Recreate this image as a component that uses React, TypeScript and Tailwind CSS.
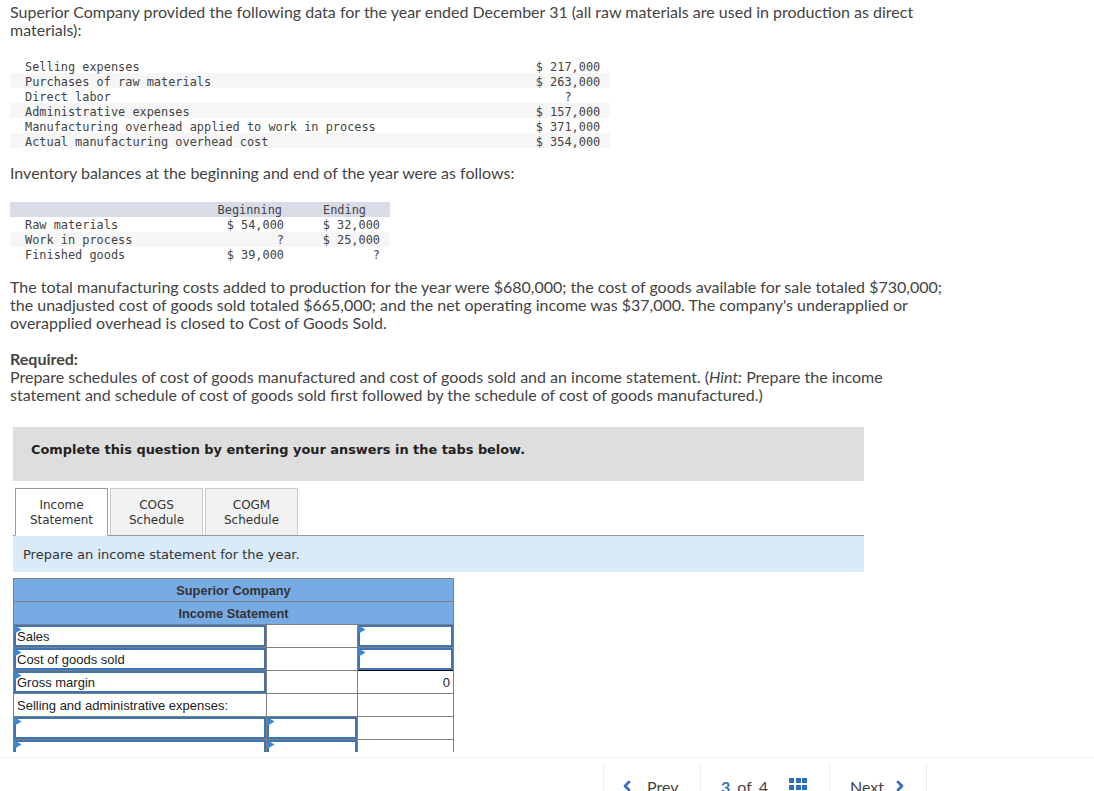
import React from "react";
import { ChevronLeft, ChevronRight } from "lucide-react";

const costs = [
  ["Selling expenses", "$ 217,000"],
  ["Purchases of raw materials", "$ 263,000"],
  ["Direct labor", "?"],
  ["Administrative expenses", "$ 157,000"],
  ["Manufacturing overhead applied to work in process", "$ 371,000"],
  ["Actual manufacturing overhead cost", "$ 354,000"],
];

const inventory = [
  ["Raw materials", "$ 54,000", "$ 32,000"],
  ["Work in process", "?", "$ 25,000"],
  ["Finished goods", "$ 39,000", "?"],
];

// small blue corner marker on the answer cells
const Marker: React.FC = () => (
  <svg className="absolute -left-[2px] -top-[2px]" width="8" height="9" viewBox="0 0 8 9">
    <path d="M0 0 L7.5 4.5 L0 9 Z" fill="#3d85d0" />
  </svg>
);

const InputCell: React.FC<{ children?: React.ReactNode }> = ({ children }) => (
  <div className="relative flex items-center whitespace-nowrap border-2 border-[#3f74b2] bg-white pl-px">
    <Marker />
    {children}
  </div>
);

const PlainCell: React.FC<{ children?: React.ReactNode; className?: string }> = ({
  children,
  className = "",
}) => (
  <div className={`flex items-center whitespace-nowrap bg-white px-[3px] ${className}`}>
    {children}
  </div>
);

const Row: React.FC<{ children: React.ReactNode }> = ({ children }) => (
  <div className="grid h-[22px] shrink-0 grid-cols-[252px_90px_95px] grid-rows-[22px] gap-px leading-[15px]">
    {children}
  </div>
);

const HeadRow: React.FC<{ children: React.ReactNode }> = ({ children }) => (
  <div className="flex h-[22px] shrink-0 items-center justify-center bg-[#78abe3] text-[12.8px] font-bold leading-[15px] text-[#333333]">
    {children}
  </div>
);

const Tab: React.FC<{ top: string; bottom: string; active?: boolean }> = ({
  top,
  bottom,
  active,
}) => (
  <div
    className={`flex h-[47px] w-[93px] flex-col items-center justify-center border pt-[2px] text-[12px] leading-[15px] ${
      active
        ? "-mb-px h-[48px] border-[#999999] border-b-white bg-white"
        : "border-[#cccccc] border-b-0 bg-[#f2f2f2]"
    }`}
  >
    <span>{top}</span>
    <span>{bottom}</span>
  </div>
);

export default function App() {
  return (
    <div className="relative h-[791px] w-[1094px] overflow-hidden bg-white font-['Lato',sans-serif] text-[16px] leading-[18px] text-[#444444]">
      <div className="px-[10px] pt-[3px]">
        <p className="w-[940px]">
          Superior Company provided the following data for the year ended December 31 (all raw
          materials are used in production as direct materials):
        </p>

        <div className="mt-[19px] w-[600px] font-['DejaVu_Sans_Mono',monospace] text-[11.9px] leading-[18px] text-[#444444]">
          {costs.map(([label, value], i) => (
            <div key={label} className={`flex h-[15px] ${i % 2 === 1 ? "bg-[#f6f6f6]" : ""}`}>
              <span className="ml-[15px] w-[510px] whitespace-nowrap">{label}</span>
              <span className="w-[66px] whitespace-nowrap text-center">{value}</span>
            </div>
          ))}
        </div>

        <p className="mt-[16px]">Inventory balances at the beginning and end of the year were as follows:</p>

        <div className="mt-[20px] w-[380px] font-['DejaVu_Sans_Mono',monospace] text-[11.9px] leading-[17px] text-[#444444]">
          <div className="flex h-[15px] bg-[#d8dce6]">
            <span className="w-[272px] text-right">Beginning</span>
            <span className="w-[84px] text-right">Ending</span>
          </div>
          {inventory.map(([label, begin, end], i) => (
            <div key={label} className={`flex h-[15px] ${i === 1 ? "bg-[#f6f6f6]" : ""}`}>
              <span className="ml-[15px] w-[150px] whitespace-nowrap">{label}</span>
              <span className="w-[109px] text-right">{begin}</span>
              <span className="ml-[9px] w-[87px] text-right">{end}</span>
            </div>
          ))}
        </div>

        <p className="mt-[16px] w-[950px]">
          The total manufacturing costs added to production for the year were $680,000; the cost of
          goods available for sale totaled $730,000; the unadjusted cost of goods sold totaled
          $665,000; and the net operating income was $37,000. The company's underapplied or
          overapplied overhead is closed to Cost of Goods Sold.
        </p>

        <p className="mt-[18px] font-bold">Required:</p>
        <p className="w-[900px]">
          <span className="block">
            Prepare schedules of cost of goods manufactured and cost of goods sold and an income
            statement. (<i>Hint:</i> Prepare the income
          </span>
          <span className="block">
            statement and schedule of cost of goods sold first followed by the schedule of cost of
            goods manufactured.)
          </span>
        </p>
      </div>

      <div className="ml-[13px] mt-[23px] w-[851px] font-['DejaVu_Sans',sans-serif]">
        <div className="flex h-[54px] items-center bg-[#dedede] pb-[9px] pl-[18px] text-[12.9px] font-bold text-[#222222]">
          Complete this question by entering your answers in the tabs below.
        </div>

        <div className="mt-[7px] flex items-start gap-[2px] border-b border-[#999999] pl-[2px] text-[#333333]">
          <Tab top="Income" bottom="Statement" active />
          <Tab top="COGS" bottom="Schedule" />
          <Tab top="COGM" bottom="Schedule" />
        </div>

        <div className="flex h-[36px] items-center bg-[#d9eaf9] pl-[10px] pt-[2px] text-[13px] text-[#333333]">
          Prepare an income statement for the year.
        </div>

        <div className="mt-[6px] flex h-[174px] w-[441px] flex-col gap-px overflow-hidden bg-[#7f7f7f] p-px font-['Liberation_Sans',sans-serif] text-[13px] text-[#222222]">
          <HeadRow>Superior Company</HeadRow>
          <HeadRow>Income Statement</HeadRow>
          <Row>
            <InputCell>Sales</InputCell>
            <PlainCell />
            <InputCell />
          </Row>
          <Row>
            <InputCell>Cost of goods sold</InputCell>
            <PlainCell />
            <InputCell />
          </Row>
          <Row>
            <InputCell>Gross margin</InputCell>
            <PlainCell />
            <PlainCell className="-mt-px justify-end border-t border-black">0</PlainCell>
          </Row>
          <Row>
            <PlainCell>Selling and administrative expenses:</PlainCell>
            <PlainCell />
            <PlainCell />
          </Row>
          <Row>
            <InputCell />
            <InputCell />
            <PlainCell />
          </Row>
          <Row>
            <InputCell />
            <InputCell />
            <PlainCell />
          </Row>
        </div>
      </div>

      <div className="mt-[5px] flex h-[34px] justify-end border-t border-[#eeeeee] pr-[167px] pt-[5px]">
        <div className="flex h-[40px] w-[98px] items-start gap-[12px] border-x border-[#eeeeee] pl-[15px] pt-[15px]">
          <ChevronLeft size={16} strokeWidth={4} className="text-[#2d72b8]" />
          <span>Prev</span>
        </div>
        <div className="flex h-[40px] w-[128px] items-start pl-[20px] pt-[15px]">
          <span className="font-bold text-[#2d72b8]">3</span>
          <span className="ml-[7px]">of</span>
          <span className="ml-[7px]">4</span>
          <div className="ml-[21px] grid grid-cols-3 gap-[1.5px]">
            {Array.from({ length: 9 }).map((_, i) => (
              <div key={i} className="h-[5px] w-[5px] bg-[#2d72b8]" />
            ))}
          </div>
        </div>
        <div className="flex h-[40px] w-[98px] items-start gap-[8px] border-x border-[#eeeeee] pl-[20px] pt-[15px]">
          <span>Next</span>
          <ChevronRight size={16} strokeWidth={4} className="text-[#2d72b8]" />
        </div>
      </div>
    </div>
  );
}
